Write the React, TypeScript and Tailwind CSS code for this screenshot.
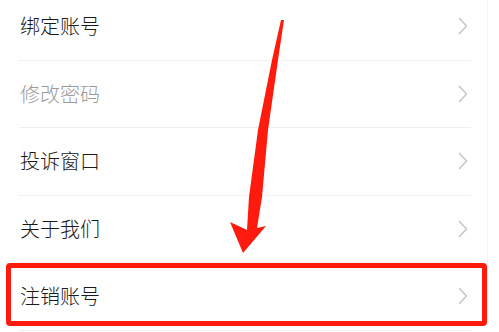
import React from 'react';

const items = [
  { label: '绑定账号', muted: false },
  { label: '修改密码', muted: true },
  { label: '投诉窗口', muted: false },
  { label: '关于我们', muted: false },
  { label: '注销账号', muted: false },
];

const Chevron: React.FC = () => (
  <svg width="12" height="18" viewBox="0 0 12 18" fill="none" className="shrink-0">
    <path d="M2.5 1.5 L9.5 9 L2.5 16.5" stroke="#c8c8c8" strokeWidth="1.7" strokeLinecap="round" strokeLinejoin="round" />
  </svg>
);

const App: React.FC = () => {
  return (
    <div
      className="relative w-[499px] h-[332px] overflow-hidden bg-white"
      style={{ fontFamily: '"Noto Sans CJK SC", "Noto Sans", sans-serif' }}
    >
      <div className="w-[488px] h-full border-r border-[#f3f3f3]">
        <ul className="-mt-[7px]">
          {items.map((item) => (
            <li key={item.label} className="pl-[19px] pr-[16px]">
              <div className="h-[67.5px] flex items-center justify-between border-b border-[#efefef] pr-[2px]">
                <span
                  className={`text-[20px] font-light leading-none pl-px ${item.muted ? 'text-[#9a9a9a]' : 'text-[#1a1a1a]'}`}
                >
                  {item.label}
                </span>
                <Chevron />
              </div>
            </li>
          ))}
        </ul>
      </div>

      {/* annotation: highlight box */}
      <div className="absolute left-[6px] top-[263px] w-[481px] h-[63px] border-[5px] border-[#fe1a0c] rounded-[4px]" />

      {/* annotation: arrow */}
      <svg className="absolute left-0 top-0" width="499" height="332" viewBox="0 0 499 332">
        <polygon
          fill="#fe1a0c"
          points="281,20 284,20 278,60 268,130 262,197 257,228 266,226 243,253 230,222 247,230 249,197 258,130 272,60"
        />
      </svg>
    </div>
  );
};

export default App;
